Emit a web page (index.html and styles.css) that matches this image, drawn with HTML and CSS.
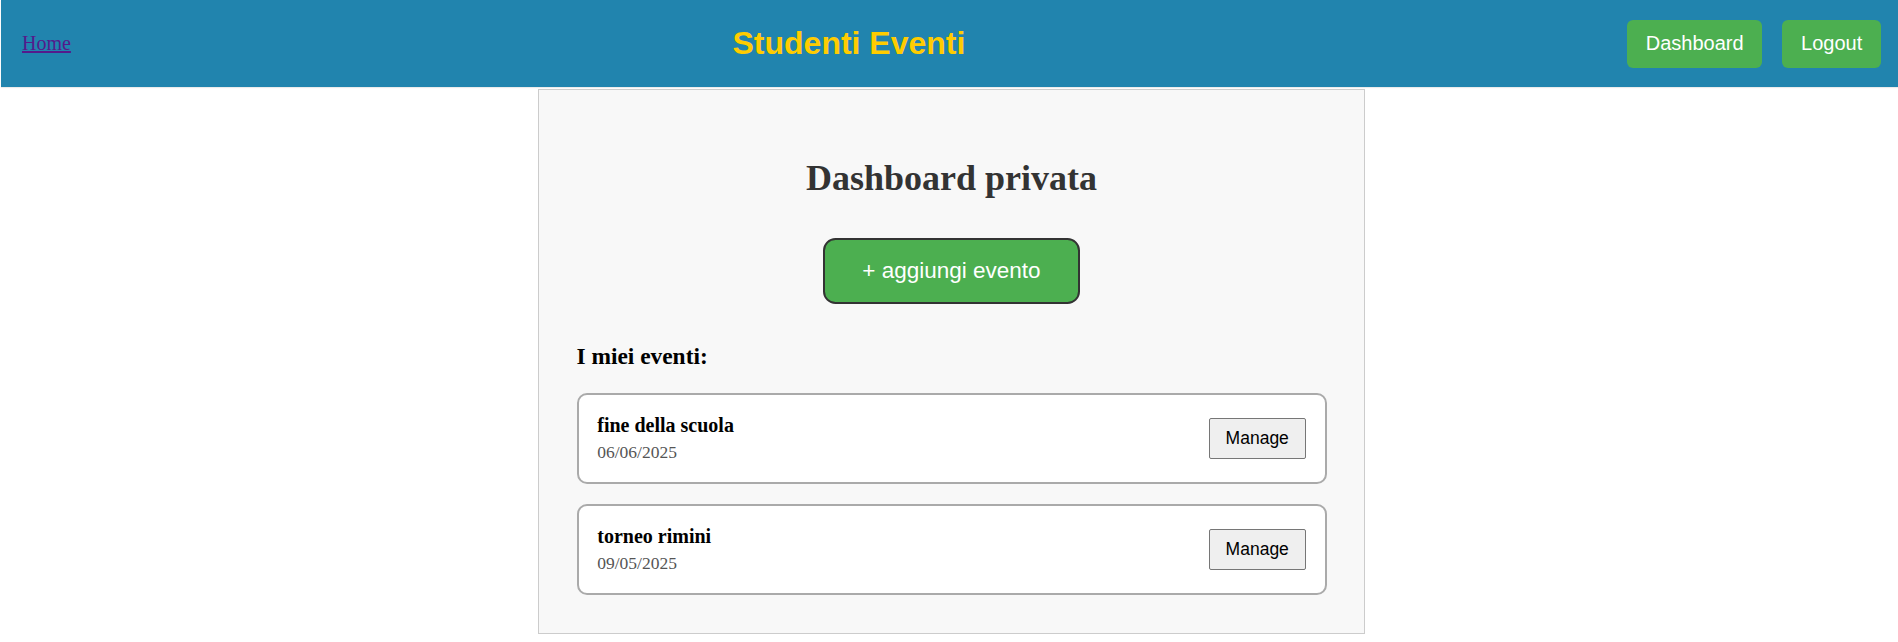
FILE: index.html
```html
<!DOCTYPE html>
<html lang="it">
<head>
<meta charset="utf-8">
<title>Studenti Eventi - Dashboard</title>
<link rel="stylesheet" href="styles.css">
</head>
<body>
<header class="topbar">
  <a class="home-link" href="#">Home</a>
  <h1 class="site-title">Studenti Eventi</h1>
  <nav class="nav-buttons">
    <a class="nav-btn" href="#">Dashboard</a>
    <a class="nav-btn" href="#">Logout</a>
  </nav>
</header>
<div class="page">
  <main class="panel">
    <h2 class="panel-title">Dashboard privata</h2>
    <div class="add-row">
      <a class="add-btn" href="#">+ aggiungi evento</a>
    </div>
    <h3 class="section-title">I miei eventi:</h3>
    <div class="event-list">
      <div class="event-card">
        <div class="event-info">
          <div class="event-name">fine della scuola</div>
          <div class="event-date">06/06/2025</div>
        </div>
        <button class="manage-btn" type="button">Manage</button>
      </div>
      <div class="event-card">
        <div class="event-info">
          <div class="event-name">torneo rimini</div>
          <div class="event-date">09/05/2025</div>
        </div>
        <button class="manage-btn" type="button">Manage</button>
      </div>
    </div>
  </main>
</div>
</body>
</html>
```

FILE: styles.css
```css
html, body {
  margin: 0;
  padding: 0;
  background: #ffffff;
}

body {
  font-family: "Liberation Serif", "Times New Roman", serif;
  font-size: 20px;
  color: #000;
}

.topbar {
  display: flex;
  align-items: center;
  justify-content: space-between;
  height: 87px;
  padding: 0 17px 0 21px;
  margin-left: 1px;
  background: #2184ae;
  box-shadow: 0 1px 1px rgba(0, 0, 0, 0.08);
}

.home-link {
  color: #551a8b;
  font-size: 20px;
  text-decoration: underline;
}

.site-title {
  margin: 0;
  font-family: "Liberation Sans", Arial, sans-serif;
  font-weight: bold;
  font-size: 32px;
  color: #ffcc00;
}

.nav-buttons {
  display: flex;
  gap: 20px;
}

.nav-btn {
  display: block;
  padding: 12.5px 18.75px;
  background: #4caf50;
  color: #ffffff;
  border-radius: 6px;
  text-decoration: none;
  font-family: "Liberation Sans", Arial, sans-serif;
  font-size: 20px;
  line-height: 23px;
}

.page {
  padding-left: 5px;
}

.panel {
  width: 750px;
  margin: 2px auto 0;
  padding: 37.5px;
  background: #f8f8f8;
  border: 1px solid #cccccc;
}

.panel-title {
  margin: 29.9px 0;
  font-size: 36px;
  font-weight: bold;
  text-align: center;
  color: #333333;
}

.add-row {
  display: flex;
  justify-content: center;
  padding: 8.6px 0 15.6px;
}

.add-btn {
  display: block;
  padding: 18px 37.5px;
  background: #4caf50;
  color: #ffffff;
  border: 2px solid #333333;
  border-radius: 12.5px;
  text-decoration: none;
  font-family: "Liberation Sans", Arial, sans-serif;
  font-size: 22.5px;
}

.section-title {
  margin: 23.4px 0;
  font-size: 23.4px;
  font-weight: bold;
}

.event-list {
  display: flex;
  flex-direction: column;
  gap: 20.5px;
}

.event-card {
  display: flex;
  align-items: center;
  justify-content: space-between;
  padding: 18.75px;
  background: #ffffff;
  border: 2px solid #aaaaaa;
  border-radius: 10px;
}

.event-name {
  font-size: 20px;
  font-weight: bold;
}

.event-date {
  margin-top: 5.2px;
  font-size: 17.5px;
  color: #555555;
}

.manage-btn {
  padding: 9px 15.9px;
  background: #efefef;
  border: 1px solid #767676;
  border-radius: 2px;
  color: #000;
  font-family: "Liberation Sans", Arial, sans-serif;
  font-size: 17.5px;
}
```
